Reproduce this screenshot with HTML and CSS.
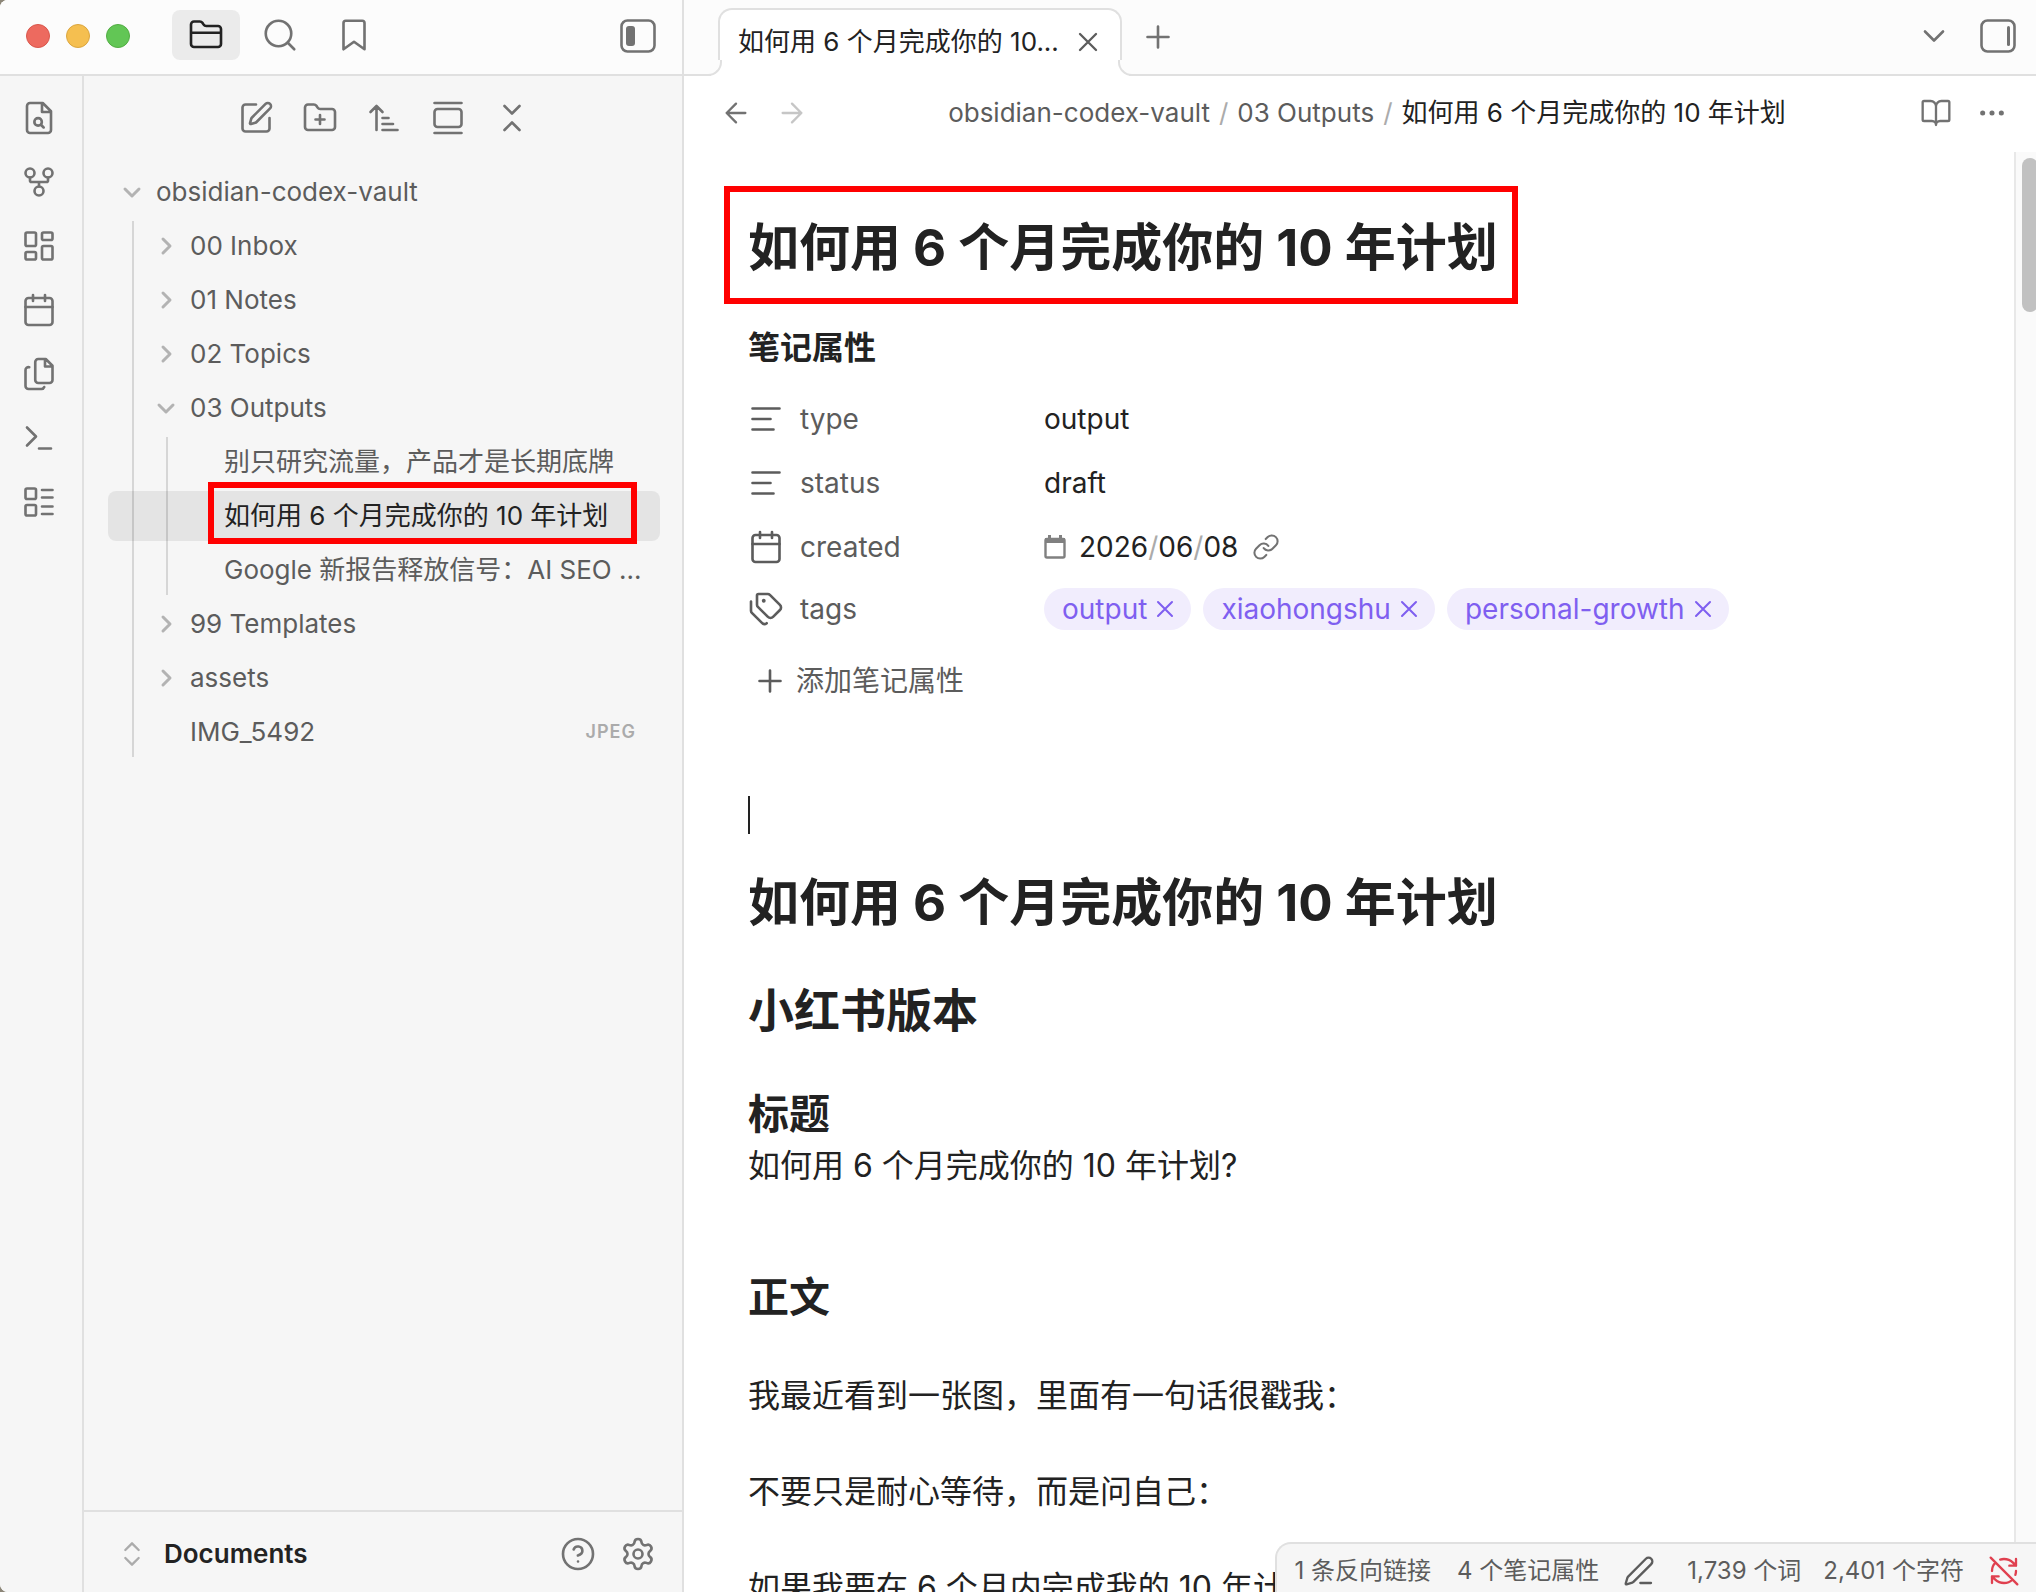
FILE: index.html
```html
<!DOCTYPE html>
<html lang="zh-CN">
<head>
    <meta charset="UTF-8">
    <meta name="viewport" content="width=device-width, initial-scale=1.0">
    <title>如何用 6 个月完成你的 10 年计划 - obsidian-codex-vault</title>
    <link rel="stylesheet" href="styles.css">
</head>
<body>
    <!-- Iconos compartidos -->
    <svg class="sprite" aria-hidden="true">
        <symbol id="i-folder" viewBox="0 0 24 24"><path d="M20 20a2 2 0 0 0 2-2V8a2 2 0 0 0-2-2h-7.9a2 2 0 0 1-1.69-.9L9.6 3.9A2 2 0 0 0 7.93 3H4a2 2 0 0 0-2 2v13a2 2 0 0 0 2 2ZM2 10.500h20"/></symbol>
        <symbol id="i-search" viewBox="0 0 24 24"><circle cx="11" cy="11" r="8.500"/><path d="m21.500 21.500-4.300-4.300"/></symbol>
        <symbol id="i-bookmark" viewBox="0 0 24 24"><path d="m19 21.500-7-5-7 5V4a1.500 1.500 0 0 1 1.500-1.500h11A1.500 1.500 0 0 1 19 4z"/></symbol>
        <symbol id="i-panel-left" viewBox="0 0 36 36"><rect x="1.500" y="2.500" width="33" height="31" rx="6" stroke-width="2.600"/><rect class="solid" x="6" y="8" width="9" height="20" rx="3"/></symbol>
        <symbol id="i-panel-right" viewBox="0 0 36 36"><rect x="1.500" y="2.500" width="33" height="31" rx="6" stroke-width="2.600"/><rect class="solid" x="27" y="8" width="3" height="20" rx="1.500"/></symbol>
        <symbol id="i-file-search" viewBox="0 0 24 24"><path d="M14.500 2H6a2 2 0 0 0-2 2v16a2 2 0 0 0 2 2h12a2 2 0 0 0 2-2V7.500L14.500 2zM14 2v6h6"/><circle cx="11.400" cy="14.600" r="2.500"/><path d="m13.300 16.500 1.800 1.800"/></symbol>
        <symbol id="i-fork" viewBox="0 0 24 24"><circle cx="12" cy="18" r="3"/><circle cx="6" cy="6" r="3"/><circle cx="18" cy="6" r="3"/><path d="M18 9v2c0 .6-.4 1-1 1H7c-.6 0-1-.4-1-1V9M12 12v3"/></symbol>
        <symbol id="i-dashboard" viewBox="0 0 24 24"><rect x="3" y="3" width="7" height="9" rx="1"/><rect x="14" y="3" width="7" height="5" rx="1"/><rect x="14" y="12" width="7" height="9" rx="1"/><rect x="3" y="16" width="7" height="5" rx="1"/></symbol>
        <symbol id="i-calendar" viewBox="0 0 24 24"><rect x="3" y="4" width="18" height="18" rx="2"/><path d="M16 2v4M8 2v4M3 10h18"/></symbol>
        <symbol id="i-files" viewBox="0 0 24 24"><path d="M11.500 2h5L21 6.500V16a2 2 0 0 1-2 2h-7.500a2 2 0 0 1-2-2V4a2 2 0 0 1 2-2zM16 2v5h5M5.500 7.500A2 2 0 0 0 3 9.500V20a2 2 0 0 0 2 2h8.500a2 2 0 0 0 2-1.300"/></symbol>
        <symbol id="i-terminal" viewBox="0 0 24 24"><path d="m4 17 6-6-6-6M12 19h8"/></symbol>
        <symbol id="i-list" viewBox="0 0 24 24"><rect x="3" y="3" width="7" height="7" rx="1"/><rect x="3" y="14" width="7" height="7" rx="1"/><path d="M14 4h7M14 9h7M14 15h7M14 20h7"/></symbol>
        <symbol id="i-edit" viewBox="0 0 24 24"><path d="M12 3H5a2 2 0 0 0-2 2v14a2 2 0 0 0 2 2h14a2 2 0 0 0 2-2v-7"/><path d="M18.375 2.625a1 1 0 0 1 3 3l-9.013 9.014a2 2 0 0 1-.853.505l-2.873.84a.5.5 0 0 1-.62-.62l.84-2.873a2 2 0 0 1 .506-.852z"/></symbol>
        <symbol id="i-folder-plus" viewBox="0 0 24 24"><path d="M12 10v6M9 13h6M20 20a2 2 0 0 0 2-2V8a2 2 0 0 0-2-2h-7.900a2 2 0 0 1-1.690-.9L9.600 3.900A2 2 0 0 0 7.930 3H4a2 2 0 0 0-2 2v13a2 2 0 0 0 2 2Z"/></symbol>
        <symbol id="i-sort" viewBox="0 0 24 24"><path d="m3 8 4-4 4 4M7 4v16M11 12h4M11 16h7M11 20h10"/></symbol>
        <symbol id="i-gallery" viewBox="0 0 24 24"><path d="M3 2h18M3 22h18"/><rect x="3" y="6" width="18" height="12" rx="2"/></symbol>
        <symbol id="i-collapse" viewBox="0 0 24 24"><path d="m7 20 5-5 5 5M7 4l5 5 5-5"/></symbol>
        <symbol id="i-up-down" viewBox="0 0 24 24"><path d="m7 15 5 5 5-5M7 9l5-5 5 5"/></symbol>
        <symbol id="i-help" viewBox="0 0 24 24"><circle cx="12" cy="12" r="10"/><path d="M9.090 9a3 3 0 0 1 5.830 1c0 2-3 3-3 3M12 17h.01"/></symbol>
        <symbol id="i-gear" viewBox="0 0 24 24"><path d="M9.671 4.136a2.340 2.340 0 0 1 4.659 0 2.340 2.340 0 0 0 3.319 1.915 2.340 2.340 0 0 1 2.330 4.033 2.340 2.340 0 0 0 0 3.831 2.340 2.340 0 0 1-2.330 4.033 2.340 2.340 0 0 0-3.319 1.915 2.340 2.340 0 0 1-4.659 0 2.340 2.340 0 0 0-3.320-1.915 2.340 2.340 0 0 1-2.330-4.033 2.340 2.340 0 0 0 0-3.831A2.340 2.340 0 0 1 6.350 6.051a2.340 2.340 0 0 0 3.319-1.915"/><circle cx="12" cy="12" r="3"/></symbol>
        <symbol id="i-down" viewBox="0 0 20 20"><path d="m3 7 7 7 7-7"/></symbol>
        <symbol id="i-right" viewBox="0 0 20 20"><path d="m7 3 7 7-7 7"/></symbol>
        <symbol id="i-close" viewBox="0 0 24 24"><path d="M18 6 6 18M6 6l12 12"/></symbol>
        <symbol id="i-plus" viewBox="0 0 24 24"><path d="M5 12h14M12 5v14"/></symbol>
        <symbol id="i-chevron" viewBox="0 0 24 24"><path d="m6 9 6 6 6-6"/></symbol>
        <symbol id="i-back" viewBox="0 0 24 24"><path d="m12 19-7-7 7-7M19 12H5"/></symbol>
        <symbol id="i-forward" viewBox="0 0 24 24"><path d="M5 12h14M12 5l7 7-7 7"/></symbol>
        <symbol id="i-book" viewBox="0 0 24 24"><path d="M12 7v14M3 18a1 1 0 0 1-1-1V4a1 1 0 0 1 1-1h5a4 4 0 0 1 4 4 4 4 0 0 1 4-4h5a1 1 0 0 1 1 1v13a1 1 0 0 1-1 1h-6a3 3 0 0 0-3 3 3 3 0 0 0-3-3z"/></symbol>
        <symbol id="i-more" viewBox="0 0 24 24"><circle class="solid" cx="5" cy="12" r="1.900"/><circle class="solid" cx="12" cy="12" r="1.900"/><circle class="solid" cx="19" cy="12" r="1.900"/></symbol>
        <symbol id="i-text" viewBox="0 0 24 24"><path d="M3 5h18M3 12h12M3 19h14"/></symbol>
        <symbol id="i-tags" viewBox="0 0 24 24"><path d="M13.172 2a2 2 0 0 1 1.414.586l6.710 6.710a2.400 2.400 0 0 1 0 3.408l-4.592 4.592a2.400 2.400 0 0 1-3.408 0l-6.710-6.710A2 2 0 0 1 6 9.172V3a1 1 0 0 1 1-1zM2 7v6.172a2 2 0 0 0 .586 1.414l6.710 6.710a2.400 2.400 0 0 0 3.191.193"/><circle class="solid" cx="10.500" cy="6.500" r="1.300"/></symbol>
        <symbol id="i-date" viewBox="0 0 22 24"><rect x="1.500" y="4" width="19" height="18.500" rx="1.500" stroke-width="2.400"/><path class="solid" d="M1 3h20v5H1zM4 0h3v4H4zM15 0h3v4h-3z"/></symbol>
        <symbol id="i-link" viewBox="0 0 24 24"><path d="M10 13a5 5 0 0 0 7.540.54l3-3a5 5 0 0 0-7.070-7.070l-1.720 1.710M14 11a5 5 0 0 0-7.540-.54l-3 3a5 5 0 0 0 7.070 7.070l1.710-1.710"/></symbol>
        <symbol id="i-pencil" viewBox="0 0 24 24"><path d="M13 21h8M21.174 6.812a1 1 0 0 0-3.986-3.987L3.842 16.174a2 2 0 0 0-.5.830l-1.321 4.352a.5.5 0 0 0 .623.622l4.353-1.320a2 2 0 0 0 .830-.497z"/></symbol>
        <symbol id="i-sync-off" viewBox="0 0 24 24"><path d="M21 8l-2.260-2.260A9.750 9.750 0 0 0 12 3c-1 0-1.970.16-2.870.47M8 16H3v5M3 12c0-2.490 1-4.740 2.640-6.360M3 16l2.260 2.260A9.750 9.750 0 0 0 12 21c2.490 0 4.740-1 6.360-2.640M21 12c0 1-.16 1.970-.47 2.870M21 3v5h-5M22 22 2 2"/></symbol>
    </svg>

    <div class="app">
        <aside class="sidebar">
            <header class="topbar">
                <div class="lights">
                    <span class="light light-red"></span>
                    <span class="light light-yellow"></span>
                    <span class="light light-green"></span>
                </div>
                <button class="side-tab active" aria-label="文件列表"><svg class="icon"><use href="#i-folder"/></svg></button>
                <button class="side-tab" aria-label="搜索"><svg class="icon"><use href="#i-search"/></svg></button>
                <button class="side-tab" aria-label="书签"><svg class="icon"><use href="#i-bookmark"/></svg></button>
                <button class="panel-btn" aria-label="折叠左侧边栏"><svg class="icon"><use href="#i-panel-left"/></svg></button>
            </header>

            <div class="sidebar-body">
                <nav class="ribbon">
                    <button aria-label="快速切换"><svg class="icon"><use href="#i-file-search"/></svg></button>
                    <button aria-label="关系图谱"><svg class="icon"><use href="#i-fork"/></svg></button>
                    <button aria-label="白板"><svg class="icon"><use href="#i-dashboard"/></svg></button>
                    <button aria-label="日记"><svg class="icon"><use href="#i-calendar"/></svg></button>
                    <button aria-label="模板"><svg class="icon"><use href="#i-files"/></svg></button>
                    <button aria-label="命令面板"><svg class="icon"><use href="#i-terminal"/></svg></button>
                    <button aria-label="数据库"><svg class="icon"><use href="#i-list"/></svg></button>
                </nav>

                <div class="explorer">
                    <div class="explorer-actions">
                        <button aria-label="新建笔记"><svg class="icon"><use href="#i-edit"/></svg></button>
                        <button aria-label="新建文件夹"><svg class="icon"><use href="#i-folder-plus"/></svg></button>
                        <button aria-label="排序"><svg class="icon"><use href="#i-sort"/></svg></button>
                        <button aria-label="自动定位"><svg class="icon"><use href="#i-gallery"/></svg></button>
                        <button aria-label="全部折叠"><svg class="icon"><use href="#i-collapse"/></svg></button>
                    </div>

                    <ul class="tree">
                        <li>
                            <a href="#" class="row level-0"><svg class="arrow"><use href="#i-down"/></svg>obsidian-codex-vault</a>
                            <ul class="children guide-0">
                                <li><a href="#" class="row level-1"><svg class="arrow"><use href="#i-right"/></svg>00 Inbox</a></li>
                                <li><a href="#" class="row level-1"><svg class="arrow"><use href="#i-right"/></svg>01 Notes</a></li>
                                <li><a href="#" class="row level-1"><svg class="arrow"><use href="#i-right"/></svg>02 Topics</a></li>
                                <li>
                                    <a href="#" class="row level-1"><svg class="arrow"><use href="#i-down"/></svg>03 Outputs</a>
                                    <ul class="children guide-1">
                                        <li><a href="#" class="row file-2">别只研究流量，产品才是长期底牌</a></li>
                                        <li><a href="#" class="row file-2 active">如何用 6 个月完成你的 10 年计划</a></li>
                                        <li><a href="#" class="row file-2">Google 新报告释放信号：AI SEO ...</a></li>
                                    </ul>
                                </li>
                                <li><a href="#" class="row level-1"><svg class="arrow"><use href="#i-right"/></svg>99 Templates</a></li>
                                <li><a href="#" class="row level-1"><svg class="arrow"><use href="#i-right"/></svg>assets</a></li>
                                <li><a href="#" class="row file-1">IMG_5492<span class="ext">JPEG</span></a></li>
                            </ul>
                        </li>
                    </ul>

                    <footer class="vault">
                        <button class="vault-name"><svg class="icon"><use href="#i-up-down"/></svg>Documents</button>
                        <button aria-label="帮助"><svg class="icon"><use href="#i-help"/></svg></button>
                        <button aria-label="设置"><svg class="icon"><use href="#i-gear"/></svg></button>
                    </footer>
                </div>
            </div>
        </aside>

        <main class="workspace">
            <header class="topbar tabs">
                <div class="tab">
                    <span class="tab-title">如何用 6 个月完成你的 10...</span>
                    <button class="tab-close" aria-label="关闭"><svg class="icon"><use href="#i-close"/></svg></button>
                </div>
                <button class="tab-new" aria-label="新标签页"><svg class="icon"><use href="#i-plus"/></svg></button>
                <div class="tabs-right">
                    <button aria-label="标签页列表"><svg class="icon"><use href="#i-chevron"/></svg></button>
                    <button aria-label="展开右侧边栏"><svg class="icon"><use href="#i-panel-right"/></svg></button>
                </div>
            </header>

            <div class="view-header">
                <button aria-label="后退"><svg class="icon"><use href="#i-back"/></svg></button>
                <button aria-label="前进" class="off"><svg class="icon"><use href="#i-forward"/></svg></button>
                <nav class="crumbs">
                    <a href="#">obsidian-codex-vault</a><span class="sep">/</span><a href="#">03 Outputs</a><span class="sep">/</span><span class="current">如何用 6 个月完成你的 10 年计划</span>
                </nav>
                <button aria-label="阅读视图"><svg class="icon"><use href="#i-book"/></svg></button>
                <button aria-label="更多选项"><svg class="icon"><use href="#i-more"/></svg></button>
            </div>

            <div class="editor">
                <article class="note">
                    <h1 class="note-title">如何用 6 个月完成你的 10 年计划</h1>

                    <section class="props">
                        <h2 class="props-heading">笔记属性</h2>
                        <div class="prop">
                            <label for="type"><svg class="icon"><use href="#i-text"/></svg>type</label>
                            <input type="text" id="type" value="output">
                        </div>
                        <div class="prop">
                            <label for="status"><svg class="icon"><use href="#i-text"/></svg>status</label>
                            <input type="text" id="status" value="draft">
                        </div>
                        <div class="prop">
                            <span class="prop-name"><svg class="icon"><use href="#i-calendar"/></svg>created</span>
                            <div class="date">
                                <svg class="date-icon"><use href="#i-date"/></svg>
                                <time datetime="2026-06-08">2026<i>/</i>06<i>/</i>08</time>
                                <a href="#" aria-label="打开日记"><svg class="icon"><use href="#i-link"/></svg></a>
                            </div>
                        </div>
                        <div class="prop prop-tags">
                            <span class="prop-name"><svg class="icon"><use href="#i-tags"/></svg>tags</span>
                            <div class="pills">
                                <span class="pill">output<button aria-label="移除 output"><svg class="icon"><use href="#i-close"/></svg></button></span>
                                <span class="pill">xiaohongshu<button aria-label="移除 xiaohongshu"><svg class="icon"><use href="#i-close"/></svg></button></span>
                                <span class="pill">personal-growth<button aria-label="移除 personal-growth"><svg class="icon"><use href="#i-close"/></svg></button></span>
                            </div>
                        </div>
                        <button class="add-prop"><svg class="icon"><use href="#i-plus"/></svg>添加笔记属性</button>
                    </section>

                    <div class="body">
                        <div class="line"><span class="caret"></span></div>
                        <h1>如何用 6 个月完成你的 10 年计划</h1>
                        <h2>小红书版本</h2>
                        <h3>标题</h3>
                        <p class="lead">如何用 6 个月完成你的 10 年计划?</p>
                        <h3>正文</h3>
                        <p>我最近看到一张图，里面有一句话很戳我：</p>
                        <p>不要只是耐心等待，而是问自己：</p>
                        <p>如果我要在 6 个月内完成我的 10 年计划</p>
                    </div>
                </article>
                <div class="scrollbar"><div class="thumb"></div></div>
            </div>

            <footer class="status-bar">
                <span class="links">1 条反向链接</span>
                <span class="count-props">4 个笔记属性</span>
                <button aria-label="编辑模式"><svg class="icon"><use href="#i-pencil"/></svg></button>
                <span class="words">1,739 个词</span>
                <span class="chars">2,401 个字符</span>
                <button class="sync" aria-label="同步已关闭"><svg class="icon"><use href="#i-sync-off"/></svg></button>
            </footer>
        </main>
    </div>
</body>
</html>
```
FILE: styles.css
```css
:root {
    --bg: #ffffff;
    --bg-soft: #f6f6f6;
    --bg-top: #fcfcfc;
    --line: #e0e0e0;
    --text: #222222;
    --muted: #5c5c5c;
    --icon: #727272;
    --faint: #ababab;
    --accent: #7f5ff0;
    --accent-bg: #f1edfd;
    --mark: #ff0000;
}

* {
    margin: 0;
    padding: 0;
    box-sizing: border-box;
}

body {
    height: 100vh;
    overflow: hidden;
    background: #8c8678;
    color: var(--text);
    font-family: Inter, "Noto Sans CJK SC", sans-serif;
    font-size: 26px;
    line-height: 40px;
}

button, input {
    border: none;
    background: none;
    color: inherit;
    font: inherit;
}

button {
    display: flex;
    align-items: center;
    justify-content: center;
    color: var(--icon);
    cursor: pointer;
}

a {
    color: inherit;
    text-decoration: none;
}

ul {
    list-style: none;
}

.sprite {
    display: none;
}

.icon {
    width: 36px;
    height: 36px;
    flex: none;
    fill: none;
    stroke: currentColor;
    stroke-width: 1.75;
    stroke-linecap: round;
    stroke-linejoin: round;
}

.solid {
    fill: currentColor;
    stroke: none;
}

.app {
    display: grid;
    grid-template-columns: 684px 1fr;
    height: 100vh;
    overflow: hidden;
    border-radius: 8px 0 0 8px;
    background: var(--bg);
}

.topbar {
    display: flex;
    flex: none;
    height: 76px;
    border-bottom: 2px solid var(--line);
    background: var(--bg-top);
}

/* Barra lateral */
.sidebar {
    display: flex;
    flex-direction: column;
    min-height: 0;
    border-right: 2px solid var(--line);
    background: var(--bg-soft);
}

.sidebar .topbar {
    align-items: flex-start;
    gap: 6px;
    padding: 10px 20px 0 26px;
}

.lights {
    display: flex;
    gap: 16px;
    margin: 14px 36px 0 0;
}

.light {
    width: 24px;
    height: 24px;
    border: 1px solid #d9574c;
    border-radius: 50%;
    background: #ed6a5f;
}

.light-yellow {
    border-color: #dba63f;
    background: #f5bf50;
}

.light-green {
    border-color: #52ad43;
    background: #62c655;
}

.side-tab {
    width: 68px;
    height: 50px;
    border-radius: 8px;
}

.side-tab.active {
    background: #ebebeb;
    color: var(--text);
}

.panel-btn {
    width: 48px;
    height: 52px;
    margin-left: auto;
}

.sidebar-body {
    display: flex;
    flex: 1;
    min-height: 0;
}

.ribbon {
    display: flex;
    flex: none;
    flex-direction: column;
    gap: 14px;
    width: 84px;
    padding: 17px 4px 0 0;
    border-right: 2px solid var(--line);
}

.ribbon button {
    height: 50px;
}

.explorer {
    display: flex;
    flex: 1;
    flex-direction: column;
    min-width: 0;
}

.explorer-actions {
    display: flex;
    flex: none;
    justify-content: center;
    height: 84px;
    padding-left: 2px;
}

.explorer-actions button {
    width: 64px;
}

.tree {
    flex: 1;
    padding: 7px 22px 0 24px;
}

.children {
    position: relative;
    display: grid;
    grid-template-columns: minmax(0, 1fr);
    gap: 4px;
    margin-top: 4px;
}

/* Guía vertical de cada carpeta abierta */
.children::before {
    content: "";
    position: absolute;
    top: 0;
    bottom: 0;
    width: 2px;
    background: rgba(0, 0, 0, 0.13);
}

.guide-0::before {
    left: 24px;
}

.guide-1::before {
    left: 58px;
}

.row {
    position: relative;
    display: flex;
    align-items: center;
    height: 50px;
    padding-right: 24px;
    border-radius: 8px;
    color: var(--muted);
    white-space: nowrap;
}

.level-0 {
    padding-left: 14px;
}

.level-1 {
    padding-left: 48px;
}

.file-1 {
    padding-left: 82px;
}

.file-2 {
    padding-left: 116px;
}

.row.active {
    background: rgba(0, 0, 0, 0.07);
    color: var(--text);
}

.row.active::after {
    content: "";
    position: absolute;
    inset: -9px 23px -3px 100px;
    border: 6px solid var(--mark);
}

.arrow {
    width: 20px;
    height: 20px;
    margin-right: 14px;
    fill: none;
    stroke: #b3b3b3;
    stroke-width: 3;
    stroke-linecap: round;
    stroke-linejoin: round;
}

.ext {
    margin-left: auto;
    color: var(--faint);
    font-size: 18px;
    font-weight: 600;
    letter-spacing: 1px;
}

.vault {
    display: flex;
    flex: none;
    align-items: center;
    height: 82px;
    padding: 4px 14px 0 32px;
    border-top: 2px solid var(--line);
}

.vault button {
    width: 60px;
    height: 50px;
}

.vault .vault-name {
    width: auto;
    gap: 16px;
    margin-right: auto;
    color: var(--text);
    font-weight: 600;
}

.vault-name .icon {
    width: 32px;
    height: 32px;
    color: var(--faint);
}

/* Zona de trabajo */
.workspace {
    position: relative;
    display: flex;
    flex-direction: column;
    min-width: 0;
    min-height: 0;
}

.tabs {
    padding: 8px 12px 0 34px;
}

.tab {
    position: relative;
    display: flex;
    align-items: center;
    justify-content: space-between;
    width: 404px;
    height: 68px;
    padding: 0 14px 2px 18px;
    border: 2px solid var(--line);
    border-bottom: none;
    border-radius: 14px 14px 0 0;
    background: var(--bg);
}

.tab::before, .tab::after {
    content: "";
    position: absolute;
    bottom: 0;
    width: 14px;
    height: 14px;
    border-bottom: 2px solid var(--line);
    background: var(--bg-top);
}

.tab::before {
    left: -14px;
    border-right: 2px solid var(--line);
    border-bottom-right-radius: 14px;
    box-shadow: 5px 5px 0 var(--bg);
}

.tab::after {
    right: -14px;
    border-left: 2px solid var(--line);
    border-bottom-left-radius: 14px;
    box-shadow: -5px 5px 0 var(--bg);
}

.tab-title {
    overflow: hidden;
    white-space: nowrap;
}

.tab-close {
    width: 36px;
    height: 40px;
    color: var(--muted);
}

.tab-close .icon {
    width: 32px;
    height: 32px;
}

.tab-new {
    width: 72px;
    height: 58px;
}

.tabs-right {
    display: flex;
    height: 56px;
    margin-left: auto;
}

.tabs-right button {
    width: 52px;
    margin-left: 12px;
}

.view-header {
    display: flex;
    flex: none;
    align-items: center;
    height: 76px;
    padding: 0 16px 2px 24px;
}

.view-header button {
    width: 56px;
    height: 52px;
}

.view-header .icon {
    width: 32px;
    height: 32px;
}

.off {
    opacity: 0.4;
}

.crumbs {
    display: flex;
    flex: 1;
    justify-content: center;
    padding-left: 6px;
    color: var(--muted);
    white-space: nowrap;
}

.sep {
    margin: 0 9px;
    color: var(--faint);
}

.current {
    color: var(--text);
}

.editor {
    display: flex;
    flex: 1;
    min-height: 0;
    overflow: hidden;
}

.note {
    flex: 1;
    min-width: 0;
    padding: 34px 66px 0 64px;
}

.note-title {
    position: relative;
    width: fit-content;
    padding: 31px 0 25px;
    font-size: 51px;
    line-height: 62px;
}

.note-title::after {
    content: "";
    position: absolute;
    inset: 0 -20px 0 -24px;
    border: 6px solid var(--mark);
}

.props {
    margin-top: 20px;
    font-size: 28px;
}

.props-heading {
    margin-bottom: 15px;
    font-size: 32px;
    font-weight: 600;
    line-height: 48px;
}

.prop {
    display: grid;
    grid-template-columns: 296px 1fr;
    align-items: center;
    height: 64px;
}

.prop-tags {
    height: 60px;
}

.prop label, .prop-name {
    display: flex;
    align-items: center;
    gap: 16px;
    color: var(--muted);
}

.date {
    display: flex;
    align-items: center;
}

.date-icon {
    width: 22px;
    height: 24px;
    margin-right: 13px;
    color: #808080;
    fill: none;
    stroke: currentColor;
}

.date i {
    color: var(--faint);
    font-style: normal;
}

.date a {
    display: flex;
    margin-left: 14px;
    color: var(--icon);
}

.date a .icon {
    width: 28px;
    height: 28px;
}

.pills {
    display: flex;
    gap: 12px;
}

.pill {
    display: flex;
    align-items: center;
    gap: 4px;
    height: 42px;
    padding: 0 12px 0 18px;
    border-radius: 21px;
    background: var(--accent-bg);
    color: var(--accent);
}

.pill button {
    color: inherit;
}

.pill .icon {
    width: 28px;
    height: 28px;
}

.add-prop {
    gap: 8px;
    height: 48px;
    margin: 18px 0 0 4px;
    color: var(--muted);
}

.body {
    margin-top: 86px;
    font-size: 32px;
    line-height: 48px;
}

.line {
    display: flex;
    align-items: center;
    height: 48px;
}

.caret {
    width: 2px;
    height: 38px;
    background: var(--text);
}

.body h1 {
    margin-top: 33px;
    font-size: 51px;
    line-height: 62px;
}

.body h2 {
    margin-top: 48px;
    font-size: 46px;
    line-height: 56px;
}

.body h3 {
    margin-top: 50px;
    font-size: 41px;
    line-height: 52px;
}

.body p {
    margin-top: 48px;
}

.body .lead {
    margin: 2px 0 81px;
}

.body h3 + p:not(.lead) {
    margin-top: 49px;
}

.scrollbar {
    flex: none;
    width: 22px;
    padding: 6px 0 0 6px;
    overflow: hidden;
    border-left: 2px solid #e8e8e8;
    background: #fafafa;
}

.thumb {
    width: 16px;
    height: 154px;
    border-radius: 8px;
    background: #c1c1c1;
}

.status-bar {
    position: absolute;
    right: 0;
    bottom: 0;
    display: flex;
    align-items: center;
    height: 50px;
    padding: 6px 16px 0 18px;
    border: 2px solid var(--line);
    border-width: 2px 0 0 2px;
    border-radius: 16px 0 0 0;
    background: var(--bg-soft);
    color: var(--muted);
    font-size: 24px;
}

.status-bar .icon {
    width: 32px;
    height: 32px;
}

.status-bar button {
    color: var(--muted);
}

.count-props {
    margin: 0 24px 0 26px;
}

.words {
    margin: 0 22px 0 32px;
}

.chars {
    margin-right: 24px;
}

.status-bar .sync {
    color: #e0404f;
}
```
